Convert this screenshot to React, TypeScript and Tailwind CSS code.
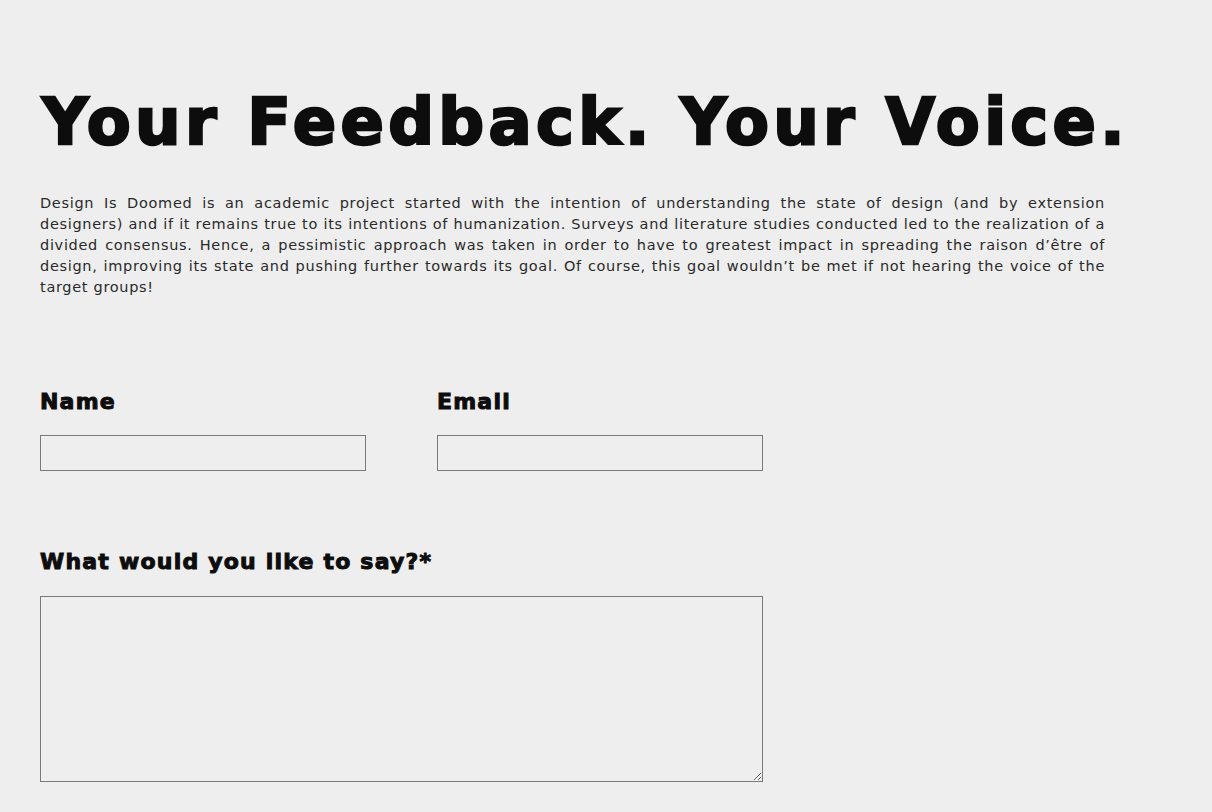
export default function App() {
  return (
    <div className="min-h-screen bg-[#eeeeee] text-[#0d0d0d]">
      <div className="px-10 pt-[82px]">
        <h1 className="ml-[2px] text-[64px] leading-[80px] font-bold tracking-[4.3px] whitespace-nowrap [-webkit-text-stroke:2.5px_#0d0d0d] [font-family:'DejaVu_Sans',sans-serif]">
          Your Feedback. Your Voice.
        </h1>

        <p className="mt-[31px] w-[1065px] text-justify text-[14.5px] leading-[21px] tracking-[0.69px] text-[#2a2a2a] [font-family:'DejaVu_Sans',sans-serif]">
          Design Is Doomed is an academic project started with the intention of understanding the state of design (and by extension designers) and if it remains true to its intentions of humanization. Surveys and literature studies conducted led to the realization of a divided consensus. Hence, a pessimistic approach was taken in order to have to greatest impact in spreading the raison d’être of design, improving its state and pushing further towards its goal. Of course, this goal wouldn’t be met if not hearing the voice of the target groups!
        </p>

        <form className="mt-[90px] w-[723px]">
          <div className="flex gap-[71px]">
            <div className="w-[326px]">
              <label className="block text-[22px] leading-[28px] font-bold tracking-[1.2px] [-webkit-text-stroke:1px_#0d0d0d] [font-family:'DejaVu_Sans',sans-serif]">
                Name
              </label>
              <input className="mt-[19px] block h-[36px] w-full border border-[#7a7a7a] bg-transparent outline-none" />
            </div>
            <div className="w-[326px]">
              <label className="block text-[22px] leading-[28px] font-bold tracking-[1.2px] [-webkit-text-stroke:1px_#0d0d0d] [font-family:'DejaVu_Sans',sans-serif]">
                Email
              </label>
              <input className="mt-[19px] block h-[36px] w-full border border-[#7a7a7a] bg-transparent outline-none" />
            </div>
          </div>

          <div className="mt-[77px]">
            <label className="block text-[22px] leading-[28px] font-bold tracking-[1.2px] [-webkit-text-stroke:1px_#0d0d0d] [font-family:'DejaVu_Sans',sans-serif]">
              What would you like to say?*
            </label>
            <textarea className="mt-[20px] block h-[186px] w-full border border-[#7a7a7a] bg-transparent outline-none" />
          </div>
        </form>
      </div>
    </div>
  )
}
